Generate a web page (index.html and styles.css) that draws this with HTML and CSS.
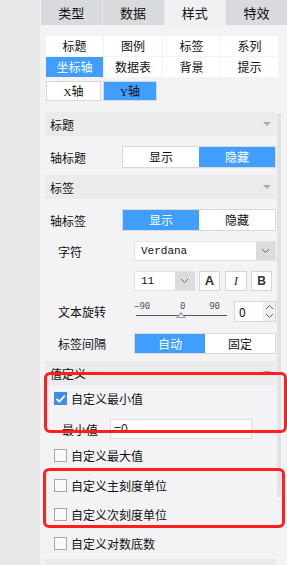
FILE: index.html
```html
<!DOCTYPE html>
<html lang="zh">
<head>
	<meta charset="UTF-8">
	<title>样式 - 坐标轴</title>
	<link rel="stylesheet" href="styles.css">
</head>
<body>
	<div class="side"></div>
	<div class="panel">
		<div class="tabs">
			<div class="tab">类型</div>
			<div class="tab">数据</div>
			<div class="tab on">样式</div>
			<div class="tab">特效</div>
		</div>

		<div class="subtabs">
			<div class="sub">标题</div>
			<div class="sub">图例</div>
			<div class="sub">标签</div>
			<div class="sub">系列</div>
			<div class="sub on">坐标轴</div>
			<div class="sub">数据表</div>
			<div class="sub">背景</div>
			<div class="sub">提示</div>
		</div>

		<div class="axis">
			<div class="axis-btn"><span class="latin">X</span>轴</div>
			<div class="axis-btn on"><span class="latin">Y</span>轴</div>
		</div>

		<div class="head head-first">标题<i class="caret"></i></div>
		<div class="row row-toggle">
			<span class="label">轴标题</span>
			<div class="toggle wide">
				<span>显示</span>
				<span class="on">隐藏</span>
			</div>
		</div>

		<div class="head head-label">标签<i class="caret"></i></div>
		<div class="row row-toggle2">
			<span class="label">轴标签</span>
			<div class="toggle wide">
				<span class="on">显示</span>
				<span>隐藏</span>
			</div>
		</div>

		<div class="row sub-row r-font">
			<span class="label2">字符</span>
			<div class="select font-select">
				<span class="val">Verdana</span>
				<span class="arrow"><svg width="9" height="6" viewBox="0 0 9 6"><path d="M1 1l3.5 3.5L8 1" fill="none" stroke="#666" stroke-width="1"/></svg></span>
			</div>
		</div>

		<div class="row sub-row r-size">
			<span class="label2"></span>
			<div class="select size-select">
				<span class="val">11</span>
				<span class="arrow"><svg width="9" height="6" viewBox="0 0 9 6"><path d="M1 1l3.5 3.5L8 1" fill="none" stroke="#666" stroke-width="1"/></svg></span>
			</div>
			<div class="fbtn bold-a">A</div>
			<div class="fbtn ital">I</div>
			<div class="fbtn bold-b">B</div>
		</div>

		<div class="row sub-row r-rotate">
			<span class="label2">文本旋转</span>
			<div class="slider">
				<div class="ticks"><span>−90</span><span class="mid">0</span><span>90</span></div>
				<div class="track"><i class="thumb"></i></div>
			</div>
			<div class="spin">
				<span class="num">0</span>
				<span class="arrows">
					<svg width="9" height="6" viewBox="0 0 9 6"><path d="M1 5l3.5-3.5L8 5" fill="none" stroke="#666" stroke-width="1"/></svg>
					<svg width="9" height="6" viewBox="0 0 9 6"><path d="M1 1l3.5 3.5L8 1" fill="none" stroke="#666" stroke-width="1"/></svg>
				</span>
			</div>
		</div>

		<div class="row sub-row r-gap">
			<span class="label2">标签间隔</span>
			<div class="toggle narrow">
				<span class="on">自动</span>
				<span>固定</span>
			</div>
		</div>

		<div class="head head-value">值定义<i class="caret"></i></div>

		<div class="check c-min">
			<span class="box checked"><svg width="13" height="13" viewBox="0 0 13 13"><path d="M2.5 6.8l2.8 2.8L10.8 3.6" fill="none" stroke="#fff" stroke-width="1.8"/></svg></span>
			<span>自定义最小值</span>
		</div>
		<div class="min-row">
			<span class="min-label">最小值</span>
			<div class="min-input">=0</div>
		</div>
		<div class="check c-max">
			<span class="box"></span>
			<span>自定义最大值</span>
		</div>
		<div class="check c-next">
			<span class="box"></span>
			<span>自定义主刻度单位</span>
		</div>
		<div class="check c-next">
			<span class="box"></span>
			<span>自定义次刻度单位</span>
		</div>
		<div class="check c-next">
			<span class="box"></span>
			<span>自定义对数底数</span>
		</div>
		<div class="head head-last"></div>

		<div class="scrollbar"></div>
		<div class="mark mark-one"></div>
		<div class="mark mark-two"></div>
	</div>
</body>
</html>
```

FILE: styles.css
```css
body{
	margin: 0;
	width: 287px;
	height: 565px;
	overflow: hidden;
	display: flex;
	font-family: "Noto Sans CJK SC", sans-serif;
	font-size: 12px;
	color: #222;
	background: #f3f3f5;
}
.side{
	width: 40px;
	flex: none;
	background: #e8e8e8;
	border-right: 1px solid #f1f1f1;
	box-shadow: inset 1px 0 0 #efe8da;
}
.panel{
	flex: 1;
	position: relative;
	background: #f3f3f5;
}

/* top tabs */
.tabs{
	display: flex;
	gap: 1px;
	height: 25px;
	background: #ececee;
}
.tab{
	flex: 1;
	background: #d9dadd;
	text-align: center;
	line-height: 25px;
	font-size: 13px;
	color: #111;
}
.tab.on{
	background: #f0f0f2;
}

/* sub tabs */
.subtabs{
	margin: 11px 0 0 5px;
	width: 231px;
	display: grid;
	grid-template-columns: 57px 58px 57px 57px;
	grid-auto-rows: 20px;
	gap: 1px;
}
.sub{
	background: #fff;
	text-align: center;
	line-height: 20px;
	color: #111;
}
.sub.on{
	background: #409eff;
	color: #fff;
}
.axis{
	margin: 4px 0 0 5px;
	display: flex;
	gap: 2px;
}
.axis-btn{
	width: 55px;
	height: 20px;
	box-sizing: border-box;
	border: 1px solid #d8d8d8;
	background: #fff;
	text-align: center;
	line-height: 18px;
	color: #111;
}
.axis-btn.on{
	width: 54px;
	background: #409eff;
	border-color: #cfd8e4;
}
.latin{
	font-family: "Liberation Serif", serif;
	font-size: 11px;
}

/* section headers */
.head{
	margin-left: 4px;
	width: 231px;
	height: 24px;
	box-sizing: border-box;
	padding: 0 5px;
	background: #ebebeb;
	display: flex;
	align-items: center;
	justify-content: space-between;
	color: #111;
}
.caret{
	width: 0;
	height: 0;
	border-left: 4px solid transparent;
	border-right: 4px solid transparent;
	border-top: 4px solid #a9a9a9;
}
.head-first{ margin-top: 11px; }
.head-label{ margin-top: 7px; }
.head-value{ margin-top: 7px; }
.head-last{ margin-top: 6px; height: 10px; }

/* rows */
.row{
	display: flex;
	align-items: center;
	margin-left: 9px;
}
.label{
	width: 72px;
	color: #111;
}
.row-toggle{ margin-top: 10px; }
.row-toggle2{ margin-top: 10px; }
.toggle{
	display: flex;
	height: 22px;
	box-sizing: border-box;
	border: 1px solid #d9d9d9;
	background: #fff;
}
.toggle span{
	flex: 1;
	text-align: center;
	line-height: 20px;
	color: #111;
}
.toggle span.on{
	background: #409eff;
	color: #fff;
}
.toggle.wide{ width: 154px; }
.toggle.narrow{ width: 142px; height: 21px; }
.toggle.narrow span{ line-height: 19px; }

.sub-row{ margin-left: 17px; }
.label2{
	width: 76px;
	color: #111;
}
.r-font{ margin-top: 10px; }
.r-size{ margin-top: 10px; }
.r-rotate{ margin-top: 10px; }
.r-gap{ margin-top: 11px; }

.select{
	display: flex;
	height: 20px;
	box-sizing: border-box;
	border: 1px solid #e2e2e2;
	background: #fff;
}
.select .val{
	flex: 1;
	padding-left: 6px;
	line-height: 18px;
	font-family: "Liberation Mono", monospace;
	font-size: 11px;
	color: #111;
}
.select .arrow{
	width: 19px;
	background: #dcdcde;
	display: flex;
	align-items: center;
	justify-content: center;
}
.font-select{ width: 142px; }
.size-select{ width: 61px; }
.fbtn{
	width: 21px;
	height: 20px;
	box-sizing: border-box;
	border: 1px solid #d6d6d6;
	background: #fff;
	margin-left: 4px;
	text-align: center;
	line-height: 18px;
	font-family: "Liberation Sans", sans-serif;
	color: #333;
}
.bold-a{ font-weight: bold; font-size: 13px; }
.ital{ margin-left: 5px; width: 22px; font-style: italic; font-family: "Liberation Serif", serif; font-size: 13px; }
.bold-b{ margin-left: 4px; font-weight: bold; font-size: 12px; }

/* slider */
.slider{
	width: 91px;
	height: 21px;
	margin-left: 2px;
	display: flex;
	flex-direction: column;
	justify-content: space-between;
}
.ticks{
	width: 86px;
	margin-left: -2px;
	display: flex;
	justify-content: space-between;
	font-family: "DejaVu Sans Mono", monospace;
	font-size: 9px;
	line-height: 10px;
	color: #555;
}
.ticks .mid{ margin-left: 6px; }
.track{
	position: relative;
	height: 1px;
	background: #555;
	margin-bottom: 6px;
}
.thumb{
	position: absolute;
	left: 40px;
	top: -3px;
	width: 0;
	height: 0;
	border-left: 5px solid transparent;
	border-right: 5px solid transparent;
	border-bottom: 6px solid #999;
}
.thumb::after{
	content: "";
	position: absolute;
	left: -3px;
	top: 2px;
	border-left: 3px solid transparent;
	border-right: 3px solid transparent;
	border-bottom: 3px solid #f3f3f5;
}
.spin{
	margin-left: 7px;
	width: 42px;
	height: 21px;
	box-sizing: border-box;
	border: 1px solid #d6d6d6;
	background: #fff;
	display: flex;
}
.spin .num{
	flex: 1;
	padding-left: 4px;
	line-height: 19px;
	color: #111;
}
.spin .arrows{
	width: 12px;
	background: #f0f0f0;
	display: flex;
	flex-direction: column;
	justify-content: space-around;
	align-items: center;
}

/* checkboxes */
.check{
	display: flex;
	align-items: center;
	height: 20px;
	margin-left: 13px;
	gap: 4px;
	color: #111;
}
.box{
	width: 13px;
	height: 13px;
	box-sizing: border-box;
	border: 1px solid #a8a8a8;
	background: #fafafa;
	display: block;
}
.box.checked{
	border: none;
	background: #3c8ee8;
}
.box svg{ display: block; }
.c-min{ margin-top: 3px; }
.c-max{ margin-top: 6px; }
.c-next{ margin-top: 10px; }
.c-next + .c-next{ margin-top: 9px; }

.min-row{
	display: flex;
	align-items: center;
	margin: 11px 0 0 21px;
}
.min-label{
	width: 48px;
	color: #111;
}
.min-input{
	width: 142px;
	height: 20px;
	box-sizing: border-box;
	border: 1px solid #dcdcdc;
	background: #fff;
	padding-left: 3px;
	line-height: 18px;
	font-family: "Liberation Sans", sans-serif;
	color: #222;
}

/* overlays */
.scrollbar{
	position: absolute;
	left: 236px;
	top: 113px;
	width: 4px;
	height: 384px;
	background: #e2e2e4;
	border-radius: 2px;
}
.mark{
	position: absolute;
	box-sizing: border-box;
	border: 3px solid #ff1f1f;
	border-radius: 6px;
}
.mark-one{
	left: 3px;
	top: 372px;
	width: 243px;
	height: 61px;
}
.mark-two{
	left: 2px;
	top: 468px;
	width: 242px;
	height: 60px;
}
```
